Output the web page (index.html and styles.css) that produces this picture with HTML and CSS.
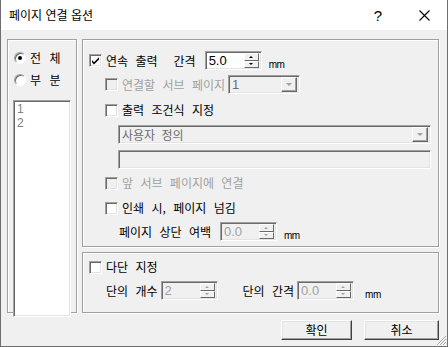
FILE: index.html
```html
<!DOCTYPE html>
<html lang="ko">
<head>
  <meta charset="UTF-8">
  <title>페이지 연결 옵션</title>
  <link rel="stylesheet" href="styles.css">
</head>
<body>
  <div class="window">
    <!-- 타이틀 바 -->
    <div class="titlebar">
      <span class="title">페이지 연결 옵션</span>
      <span class="title-btn help">?</span>
      <span class="title-btn close">
        <svg width="11" height="11" viewBox="0 0 11 11"><path d="M0.5 0.5 L10.5 10.5 M10.5 0.5 L0.5 10.5" stroke="#000" stroke-width="1.1" fill="none"/></svg>
      </span>
    </div>

    <div class="body">
      <div class="main">
        <!-- 범위 선택 -->
        <div class="group range">
          <div class="radio-row first">
            <span class="radio checked"></span><span class="wide">전 체</span>
          </div>
          <div class="radio-row">
            <span class="radio"></span><span class="wide">부 분</span>
          </div>
          <div class="listbox">
            <div class="item">1</div>
            <div class="item">2</div>
          </div>
        </div>

        <div class="right">
          <!-- 연속 출력 옵션 -->
          <div class="group options">
            <div class="row r1">
              <span class="check checked">
                <svg width="9" height="9" viewBox="0 0 9 9"><path d="M1 4 L3 6.2 L8 1.2 L8 3.4 L3 8.4 L1 6.2 Z" fill="#000"/></svg>
              </span>
              <span class="label">연속 출력</span>
              <span class="label gap-label">간격</span>
              <div class="spin">
                <span class="value">5.0</span>
                <span class="spin-btns"><span class="up"></span><span class="down"></span></span>
              </div>
              <span class="unit">mm</span>
            </div>

            <div class="row r2 indent">
              <span class="check disabled"></span>
              <span class="label off">연결할 서브 페이지</span>
              <div class="combo small disabled">
                <span class="value">1</span>
                <span class="drop"></span>
              </div>
            </div>

            <div class="row r3 indent">
              <span class="check"></span>
              <span class="label">출력 조건식 지정</span>
            </div>

            <div class="combo wide-field disabled r4">
              <span class="value">사용자 정의</span>
              <span class="drop"></span>
            </div>

            <div class="field wide-field r5"></div>

            <div class="row r6 indent">
              <span class="check disabled"></span>
              <span class="label off">앞 서브 페이지에 연결</span>
            </div>

            <div class="row r7 indent">
              <span class="check"></span>
              <span class="label">인쇄 시, 페이지 넘김</span>
            </div>

            <div class="row r8 sub">
              <span class="label">페이지 상단 여백</span>
              <div class="spin disabled">
                <span class="value">0.0</span>
                <span class="spin-btns"><span class="up"></span><span class="down"></span></span>
              </div>
              <span class="unit">mm</span>
            </div>
          </div>

          <!-- 다단 지정 -->
          <div class="group columns">
            <div class="row b1">
              <span class="check"></span>
              <span class="label">다단 지정</span>
            </div>
            <div class="row b2">
              <span class="label">단의 개수</span>
              <div class="spin disabled">
                <span class="value">2</span>
                <span class="spin-btns"><span class="up"></span><span class="down"></span></span>
              </div>
              <span class="label col-gap">단의 간격</span>
              <div class="spin disabled">
                <span class="value">0.0</span>
                <span class="spin-btns"><span class="up"></span><span class="down"></span></span>
              </div>
              <span class="unit wide-unit">mm</span>
            </div>
          </div>
        </div>
      </div>

      <div class="buttons">
        <button class="btn ok">확인</button>
        <button class="btn cancel">취소</button>
      </div>
    </div>

    <svg class="grip" width="11" height="11" viewBox="0 0 11 11">
      <path d="M10 1 L1 10 M10 4 L4 10 M10 7 L7 10" stroke="#a0a0a0" stroke-width="1" fill="none"/>
      <path d="M10 2 L2 10 M10 5 L5 10 M10 8 L8 10" stroke="#fff" stroke-width="1" fill="none"/>
    </svg>
  </div>
</body>
</html>
```

FILE: styles.css
```css
/* Global */
html, body {
  margin: 0;
  padding: 0;
}
body {
  font-family: "Noto Sans CJK KR", sans-serif;
  font-size: 12px;
  color: #000;
  background: #f0f0f0;
}
.window {
  position: relative;
  width: 448px;
  height: 347px;
  box-sizing: border-box;
  border: 1px solid #6f6f6f;
  border-top: none;
  background: #f0f0f0;
}

/* Title bar */
.titlebar {
  height: 30px;
  background: #fff;
  display: flex;
  align-items: center;
}
.title {
  padding-left: 8px;
  flex: 1;
  line-height: 1;
}
.title-btn {
  width: 46px;
  height: 30px;
  display: flex;
  align-items: center;
  justify-content: center;
}
.help {
  font-family: "Liberation Sans", sans-serif;
  font-size: 15px;
}

/* Body */
.body {
  padding: 9px 8px 0 6px;
}
.main {
  display: flex;
  gap: 5px;
}
.group {
  box-sizing: border-box;
  border: 1px solid #a0a0a0;
  box-shadow: inset 1px 1px 0 #fff, 1px 1px 0 #fff;
}

/* Left range group */
.range {
  width: 70px;
  height: 274px;
  padding: 0 5px 0 5px;
}
.radio-row {
  display: flex;
  align-items: center;
  height: 20px;
  margin-top: 2px;
}
.radio-row.first {
  margin-top: 8px;
}
.radio {
  width: 12px;
  height: 12px;
  box-sizing: border-box;
  border-radius: 50%;
  border: 1px solid;
  border-color: #a0a0a0 #fff #fff #a0a0a0;
  background: #fff;
  box-shadow: inset 1px 1px 0 #696969;
  margin-left: 1px;
  margin-right: 4px;
  position: relative;
}
.radio.checked::after {
  content: "";
  position: absolute;
  left: 3px;
  top: 3px;
  width: 4px;
  height: 4px;
  border-radius: 50%;
  background: #000;
}
.wide {
  word-spacing: 5px;
  line-height: 1;
}
.listbox {
  margin-top: 10px;
  height: 217px;
  box-sizing: border-box;
  border: 1px solid;
  border-color: #a0a0a0 #fff #fff #a0a0a0;
  box-shadow: inset 1px 1px 0 #696969, inset -1px -1px 0 #e3e3e3;
  background: #fff;
  padding: 1px 3px;
}
.item {
  font-family: "Liberation Sans", sans-serif;
  font-size: 12px;
  line-height: 14px;
  color: #808080;
}

/* Right column */
.right {
  display: flex;
  flex-direction: column;
  gap: 5px;
}
.options {
  width: 357px;
  height: 208px;
  padding-left: 6px;
}
.columns {
  width: 357px;
  height: 61px;
  padding-left: 6px;
}
.row {
  display: flex;
  align-items: center;
}
.indent {
  padding-left: 16px;
}
.sub {
  padding-left: 30px;
}
.r1 { margin-top: 11px; height: 19px; }
.r2 { margin-top: 5px; height: 19px; }
.r3 { margin-top: 6px; height: 20px; }
.r4 { margin-top: 5px; margin-left: 29px; }
.r5 { margin-top: 6px; margin-left: 29px; }
.r6 { margin-top: 4px; height: 20px; }
.r7 { margin-top: 5px; height: 20px; }
.r8 { margin-top: 4px; height: 19px; }
.b1 { margin-top: 4px; height: 20px; }
.b2 { margin-top: 4px; height: 19px; padding-left: 17px; }

.label {
  line-height: 1;
  white-space: nowrap;
  word-spacing: 4px;
}
.label.off {
  color: #a0a0a0;
}
.gap-label {
  margin-left: 16px;
  margin-right: 9px;
}
.r2 .label {
  margin-right: 3px;
}
.r8 .label {
  margin-right: 9px;
}
.b2 .label {
  margin-right: 3px;
}
.col-gap {
  margin-left: 25px;
}
.unit {
  font-family: "Liberation Sans", sans-serif;
  font-size: 10px;
  align-self: flex-end;
  margin-left: 7px;
  letter-spacing: -0.5px;
}
.wide-unit {
  margin-left: 11px;
}

/* Check box */
.check {
  width: 13px;
  height: 13px;
  box-sizing: border-box;
  border: 1px solid;
  border-color: #a0a0a0 #fff #fff #a0a0a0;
  box-shadow: inset 1px 1px 0 #696969, inset -1px -1px 0 #e3e3e3;
  background: #fff;
  margin-right: 4px;
  display: flex;
  align-items: center;
  justify-content: center;
  flex-shrink: 0;
}
.check.disabled {
  background: #f0f0f0;
}

/* Sunken fields */
.spin, .combo, .field {
  box-sizing: border-box;
  border: 1px solid;
  border-color: #a0a0a0 #fff #fff #a0a0a0;
  box-shadow: inset 1px 1px 0 #696969, inset -1px -1px 0 #e3e3e3;
  background: #fff;
  display: flex;
  align-items: center;
  height: 19px;
  padding: 2px;
}
.spin {
  width: 57px;
}
.spin.disabled, .combo.disabled, .field {
  background: #f0f0f0;
}
.value {
  flex: 1;
  font-family: "Liberation Sans", sans-serif;
  font-size: 13px;
  line-height: 1;
  padding-left: 1px;
}
.disabled .value {
  color: #a0a0a0;
}
.combo .value {
  color: #6d6d6d;
}
.combo.wide-field .value {
  font-family: "Noto Sans CJK KR", sans-serif;
  font-size: 12px;
  word-spacing: 3px;
}
.wide-field {
  width: 313px;
}
.combo.small {
  width: 72px;
}
.spin-btns {
  display: flex;
  flex-direction: column;
  width: 15px;
  height: 15px;
}
.spin-btns span {
  flex: 1;
  box-sizing: border-box;
  border: 1px solid;
  border-color: #fff #696969 #696969 #fff;
  background: #f0f0f0;
  position: relative;
}
.spin-btns span::after {
  content: "";
  position: absolute;
  left: 4px;
  top: 2px;
  border-left: 2px solid transparent;
  border-right: 2px solid transparent;
}
.spin-btns .up::after {
  border-bottom: 2px solid #000;
}
.spin-btns .down::after {
  border-top: 2px solid #000;
  top: 1px;
}
.disabled .spin-btns span::after {
  border-bottom-color: #a0a0a0;
  border-top-color: #a0a0a0;
}
.drop {
  width: 16px;
  height: 15px;
  box-sizing: border-box;
  border: 1px solid;
  border-color: #fff #696969 #696969 #fff;
  box-shadow: inset -1px -1px 0 #a0a0a0;
  background: #f0f0f0;
  position: relative;
}
.drop::after {
  content: "";
  position: absolute;
  left: 4px;
  top: 5px;
  border-left: 3px solid transparent;
  border-right: 3px solid transparent;
  border-top: 3px solid #a0a0a0;
}

/* Buttons */
.buttons {
  display: flex;
  justify-content: flex-end;
  gap: 12px;
  margin-top: 7px;
}
.btn {
  font-family: "Noto Sans CJK KR", sans-serif;
  font-size: 12px;
  height: 20px;
  padding: 0;
  line-height: 1;
  background: #f0f0f0;
  border: 1px solid;
  border-color: #fff #404040 #404040 #fff;
  box-shadow: inset -1px -1px 0 #a0a0a0, inset 1px 1px 0 #e3e3e3;
  color: #000;
}
.ok {
  width: 71px;
}
.cancel {
  width: 75px;
}
.grip {
  position: absolute;
  right: 0;
  bottom: 0;
}
```
